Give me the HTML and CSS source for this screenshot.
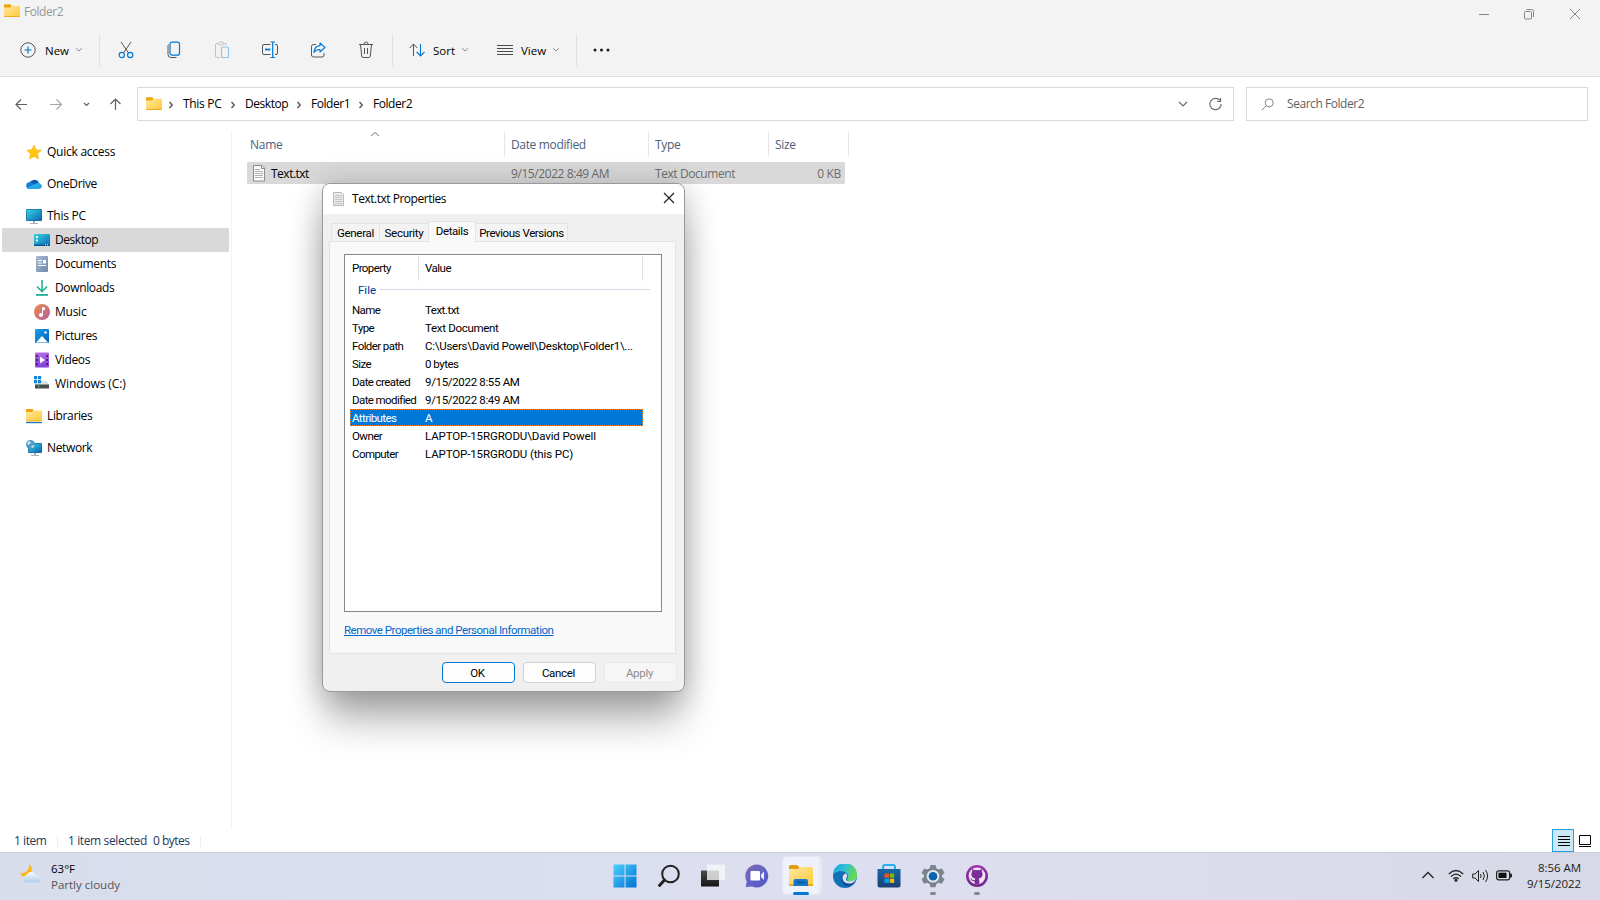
FILE: index.html
```html
<!DOCTYPE html>
<html lang="en">
<head>
<meta charset="utf-8">
<title>Folder2</title>
<link rel="stylesheet" href="styles.css">
</head>
<body>
<svg class="defs" aria-hidden="true">
  <defs>
    <linearGradient id="gf" x1="0" y1="0" x2="1" y2="1"><stop offset="0" stop-color="#ffe8a0"/><stop offset="1" stop-color="#ffc83a"/></linearGradient>
    <linearGradient id="gm" x1="0" y1="0" x2="1" y2="1"><stop offset="0" stop-color="#34d6e0"/><stop offset="1" stop-color="#0f64b8"/></linearGradient>
    <linearGradient id="gb" x1="0" y1="0" x2="1" y2="1"><stop offset="0" stop-color="#18a0e8"/><stop offset="1" stop-color="#0560b6"/></linearGradient>
    <linearGradient id="gw" x1="0" y1="0" x2="1" y2="1"><stop offset="0" stop-color="#4fd0ff"/><stop offset="1" stop-color="#0072d0"/></linearGradient>
    <linearGradient id="gmu" x1="0" y1="0" x2="1" y2="1"><stop offset="0" stop-color="#ee8850"/><stop offset="1" stop-color="#b0609c"/></linearGradient>
    <linearGradient id="gd" x1="0" y1="0" x2="1" y2="1"><stop offset="0" stop-color="#a9bbd3"/><stop offset="1" stop-color="#6d89ad"/></linearGradient>
    <linearGradient id="gv" x1="0" y1="0" x2="0" y2="1"><stop offset="0" stop-color="#b36ae8"/><stop offset="1" stop-color="#8240dc"/></linearGradient>
    <linearGradient id="gc" x1="0" y1="0" x2="0" y2="1"><stop offset="0" stop-color="#f4f8fd"/><stop offset="1" stop-color="#b4cdea"/></linearGradient>
    <linearGradient id="gch" x1="0" y1="0" x2="1" y2="1"><stop offset="0" stop-color="#8a64a8"/><stop offset=".5" stop-color="#6264c8"/><stop offset="1" stop-color="#5155c4"/></linearGradient>
    <linearGradient id="ge" x1="0" y1="0" x2="1" y2=".4"><stop offset="0" stop-color="#1a9fe0"/><stop offset=".5" stop-color="#30bfd8"/><stop offset="1" stop-color="#66d956"/></linearGradient>
    <linearGradient id="gs" x1="0" y1="0" x2="0" y2="1"><stop offset="0" stop-color="#1668a8"/><stop offset="1" stop-color="#1c3f74"/></linearGradient>
    <linearGradient id="gt" x1="0" y1="0" x2="0" y2="1"><stop offset="0" stop-color="#4a4a4a"/><stop offset="1" stop-color="#161616"/></linearGradient>
    <linearGradient id="gg" x1="0" y1="0" x2="0" y2="1"><stop offset="0" stop-color="#a032b0"/><stop offset="1" stop-color="#6a2888"/></linearGradient>
    <symbol id="folder" viewBox="0 0 16 14"><path d="M0 1.200Q0 .2 1 .2h5.200L7.700 2v2H0z" fill="#f0a30a"/><path d="M0 3.400h6L7.600 1.800H15q1 0 1 1v9.200q0 1-1 1H1q-1 0-1-1z" fill="url(#gf)"/><path d="M0 12h16q0 1-1 1H1q-1 0-1-1z" fill="#f1a51e"/></symbol>
    <symbol id="chev-r" viewBox="0 0 6 8"><path d="M1.500 1l2.700 3-2.700 3" fill="none" stroke="#555" stroke-width="1.400"/></symbol>
    <symbol id="chev-d" viewBox="0 0 8 6"><path d="M1.200 1.300L4 4l2.800-2.700" fill="none" stroke="#8a8a8a" stroke-width="1"/></symbol>
    <symbol id="txt" viewBox="0 0 14 17"><path d="M1.500.500h8.500L12.500 3v13H1.500z" fill="#fcfcfc" stroke="#8d8d8d"/><path d="M9.500.5v3h3" fill="none" stroke="#8d8d8d"/><path d="M3 4.500h5M3 6.500h8M3 8.500h8M3 10.500h8M3 12.500h8" stroke="#a8a8a8" stroke-width=".9"/></symbol>
    <symbol id="txt-dim" viewBox="0 0 11 14"><path d="M.5.500h8L10.500 2.500v11H.5z" fill="#ececec" stroke="#b9b9b9"/><path d="M2 3.500h7M2 5.500h7M2 7.500h7M2 9.500h7M2 11.500h7" stroke="#c4c4c4"/></symbol>
  </defs>
</svg>

<div class="explorer">
  <header class="top">
    <div class="titlebar">
      <svg class="title-icon" width="16" height="14"><use href="#folder"/></svg>
      <span class="title">Folder2</span>
      <svg class="caption" width="102" height="12" viewBox="0 0 102 12" fill="none" stroke="#868686"><path d="M0 6.500h10"/><rect x="45.500" y="3.500" width="7" height="7.500" rx="1"/><path d="M47.500 1.500h5q2 0 2 2v5.500"/><path d="M91 1l10 10M101 1L91 11"/></svg>
    </div>
    <div class="commands">
      <div class="cmd cmd-new"><svg width="16" height="16" viewBox="0 0 16 16" fill="none"><circle cx="8" cy="8" r="7.200" stroke="#555"/><path d="M8 4.500v7M4.500 8h7" stroke="#0078d4" stroke-width="1.200"/></svg><span class="cmd-label">New</span><svg width="8" height="6"><use href="#chev-d"/></svg></div>
      <div class="sep"></div>
      <div class="tools">
        <svg width="16" height="18" viewBox="0 0 16 18" fill="none"><path d="M3 1l7.500 11M13 1L5.500 12" stroke="#555"/><circle cx="3.800" cy="14" r="2.600" stroke="#0078d4" stroke-width="1.200"/><circle cx="12.200" cy="14" r="2.600" stroke="#0078d4" stroke-width="1.200"/></svg>
        <svg width="16" height="18" viewBox="0 0 16 18" fill="none"><path d="M2.500 3.500Q2 4 2 5v8.500q0 3 3 3h5.500" stroke="#555"/><rect x="4" y="1.200" width="9.500" height="13" rx="2" stroke="#0078d4" stroke-width="1.200"/></svg>
        <svg width="16" height="18" viewBox="0 0 16 18" fill="none"><path d="M4.500 2.500H3Q1.500 2.500 1.500 4v11q0 1.500 1.500 1.500h3M9.500 2.500H11q1.500 0 1.500 1.500" stroke="#c2c2c2"/><rect x="4.500" y="1.200" width="5" height="2.500" rx="1" stroke="#c2c2c2"/><rect x="7.500" y="6" width="7" height="10.500" rx="1" stroke="#93c5ea" stroke-width="1.200"/></svg>
        <svg width="16" height="18" viewBox="0 0 16 18" fill="none"><path d="M8.500 3.500H2Q.5 3.500.5 5v7q0 1.500 1.500 1.500h6.500M13 3.500h1q1.500 0 1.500 1.500v7q0 1.500-1.500 1.500h-1" stroke="#555"/><path d="M3 8.500h5.500" stroke="#0078d4" stroke-width="1.800"/><path d="M8.500 1h4.500M8.500 16.500h4.500M10.700 1v15.500" stroke="#0078d4" stroke-width="1.200"/></svg>
        <svg width="16" height="18" viewBox="0 0 16 18" fill="none"><path d="M6 3.500H3.500q-2 0-2 2V14q0 2 2 2H12q2 0 2-2v-2" stroke="#555"/><path d="M10 2l5 4.500-5 4.500V8.500Q6 8.300 4 11.500 4.300 5 10 4.600z" stroke="#0078d4" stroke-width="1.100" stroke-linejoin="round"/></svg>
        <svg width="16" height="18" viewBox="0 0 16 18" fill="none" stroke="#555"><path d="M1 3.500h14M5.800 3.500Q6 1 8 1t2.200 2.500M2.500 3.500l1.200 11.500q.2 1.500 1.500 1.500h5.600q1.300 0 1.500-1.500l1.200-11.500M6.500 7v6M9.500 7v6"/></svg>
      </div>
      <div class="sep"></div>
      <div class="cmd cmd-sort"><svg width="17" height="14" viewBox="0 0 17 14" fill="none"><path d="M4.500 13V1M.7 5l3.800-4 3.800 4" stroke="#555"/><path d="M11.500 1v12M7.700 9l3.800 4 4-4" stroke="#0078d4" stroke-width="1.100"/></svg><span class="cmd-label">Sort</span><svg width="8" height="6"><use href="#chev-d"/></svg></div>
      <div class="cmd cmd-view"><svg width="16" height="12" viewBox="0 0 16 12"><path d="M0 1.500h16M0 4.500h16M0 7.500h16M0 10.500h16" stroke="#4a4a4a"/></svg><span class="cmd-label">View</span><svg width="8" height="6"><use href="#chev-d"/></svg></div>
      <div class="sep"></div>
      <svg class="more" width="17" height="4" viewBox="0 0 17 4" fill="#1a1a1a"><circle cx="2" cy="2" r="1.500"/><circle cx="8.500" cy="2" r="1.500"/><circle cx="15" cy="2" r="1.500"/></svg>
    </div>
  </header>

  <div class="nav">
    <svg class="nav-btns" width="108" height="14" viewBox="0 0 108 14" fill="none" stroke="#606060" stroke-width="1.200"><path d="M12 7.500H1M6 2.500L1 7.500l5 5"/><path d="M35 7.500h11M41.500 2.500l5 5-5 5" stroke="#a6a6a6"/><path d="M69 6l2.500 2.500L74 6"/><path d="M100.500 13V2M95.500 7l5-5 5 5"/></svg>
    <div class="address">
      <svg width="16" height="14"><use href="#folder"/></svg>
      <svg class="crumb-sep first" width="6" height="8"><use href="#chev-r"/></svg><span class="crumb w-pc">This PC</span>
      <svg class="crumb-sep" width="6" height="8"><use href="#chev-r"/></svg><span class="crumb w-desk">Desktop</span>
      <svg class="crumb-sep" width="6" height="8"><use href="#chev-r"/></svg><span class="crumb w-f1">Folder1</span>
      <svg class="crumb-sep" width="6" height="8"><use href="#chev-r"/></svg><span class="crumb">Folder2</span>
      <svg class="addr-end" width="44" height="14" viewBox="0 0 44 14" fill="none" stroke="#6b6b6b" stroke-width="1.200"><path d="M1 5l4 4 4-4"/><path d="M42 3.500A5.700 5.700 0 1 0 43.200 7M42.500 1v3.500H39"/></svg>
    </div>
    <div class="search">
      <svg width="13" height="13" viewBox="0 0 13 13" fill="none" stroke="#8c8688"><circle cx="8.200" cy="4.800" r="4"/><path d="M5.200 7.800L.7 12.300"/></svg>
      <span>Search Folder2</span>
    </div>
  </div>

  <div class="main">
    <aside class="tree">
      <div class="node top-level"><svg width="16" height="16" viewBox="0 0 16 16"><path d="M8 1l2.200 4.700 5.100.6-3.800 3.500 1 5.100L8 12.400l-4.500 2.500 1-5.100L.7 6.300l5.100-.6z" fill="#ffc60b" stroke="#f2a60d" stroke-width=".5"/></svg><span>Quick access</span></div>
      <div class="node top-level od"><svg width="16" height="16" viewBox="0 0 16 16"><path d="M3 8a5.300 5.300 0 0 1 10-1l-4 4z" fill="#0a5ab0"/><path d="M3.500 13A3.400 3.400 0 0 1 3.700 6.200Q6 6 8.500 8.500L12 13z" fill="#1480d4"/><path d="M12.800 13H3.400q-1.200 0-2.300-1l8-4q3-2.300 5.500 0 1.400 1 1.400 2.300 0 2.300-3.200 2.700z" fill="#28a8ea"/></svg><span>OneDrive</span></div>
      <div class="node top-level last"><svg width="16" height="16" viewBox="0 0 16 16"><path d="M7 13h2v2h3v1H4v-1h3z" fill="#a8b2ba"/><rect y="1" width="16" height="12" rx="1" fill="#176a9a"/><rect x=".7" y="1.700" width="14.600" height="10.600" fill="url(#gm)"/></svg><span>This PC</span></div>
      <div class="node child selected"><svg width="16" height="16" viewBox="0 0 16 16"><rect y="2" width="16" height="12" rx="1" fill="url(#gm)"/><path d="M0 12.500h16v1q0 .5-1 .5H1q-1 0-1-.5z" fill="#0a5590"/><path d="M2 4h2v2H2zM2 7.500h2v2H2z" fill="#e6fbff"/><path d="M11 12.800h1M13 12.800h1" stroke="#fff"/></svg><span>Desktop</span></div>
      <div class="node child tight"><svg width="16" height="16" viewBox="0 0 16 16"><rect x="2" width="12" height="16" rx="1" fill="url(#gd)"/><path d="M4 4.500h4M4 7h4M4 9.500h8" stroke="#fff"/><rect x="9" y="4" width="3" height="3.500" fill="#fff"/></svg><span>Documents</span></div>
      <div class="node child tight"><svg width="16" height="16" viewBox="0 0 16 16"><path d="M8 0v11M3 6.500l5 5 5-5" fill="none" stroke="#1fb492" stroke-width="1.600"/><path d="M2 14h12v1.800H2z" fill="#1aae92"/></svg><span>Downloads</span></div>
      <div class="node child"><svg width="16" height="16" viewBox="0 0 16 16"><circle cx="8" cy="8" r="8" fill="url(#gmu)"/><circle cx="7" cy="11" r="2" fill="#fff"/><path d="M8 3v8h1V6h2V3.500z" fill="#fff"/></svg><span>Music</span></div>
      <div class="node child tight"><svg width="16" height="16" viewBox="0 0 16 16"><rect x="1" y="1" width="14" height="14" rx="1" fill="url(#gb)"/><path d="M2 14.500L8 8l6 6.500z" fill="#fff"/><circle cx="11.500" cy="4.500" r="1.300" fill="#d8f0ff"/></svg><span>Pictures</span></div>
      <div class="node child tight"><svg width="16" height="16" viewBox="0 0 16 16"><rect x="1" y=".5" width="14" height="15" rx="1" fill="url(#gv)"/><path d="M6 4.500l5 3.500-5 3.500z" fill="#fff"/><path d="M2 3h1.800v2H2zM2 7h1.800v2H2zM2 11h1.800v2H2zM12.200 3H14v2h-1.800zM12.200 7H14v2h-1.800zM12.200 11H14v2h-1.800z" fill="#482070"/></svg><span>Videos</span></div>
      <div class="node child drive"><svg width="16" height="16" viewBox="0 0 16 16"><path d="M2 7.500L4 5h9l2 4H1.500z" fill="#dde1e4"/><rect x="1" y="8.500" width="14" height="4" fill="#4a4d50"/><path d="M0 0h7.500v7.500H0z" fill="#fff"/><path d="M0 0h3.200v3.200H0zM4 0h3.200v3.200H4zM0 4h3.200v3.200H0zM4 4h3.200v3.200H4z" fill="#1486d8"/><rect x="4" y="9.500" width="1.300" height="1.300" fill="#3be05c"/></svg><span>Windows (C:)</span></div>
      <div class="node top-level after tight"><svg width="16" height="16" viewBox="0 0 16 16"><path d="M0 2q0-1 1-1h5.500L8 2.500V5H0z" fill="#f0a30a"/><path d="M0 4h6l1.500-1.500H15q1 0 1 1V13H0z" fill="url(#gf)"/><path d="M1 12.500h14v1H1z" fill="#f0a30a"/><path d="M0 14h16v1.200H0z" fill="#1478c8"/></svg><span>Libraries</span></div>
      <div class="node top-level tight"><svg width="16" height="16" viewBox="0 0 16 16"><path d="M8 13h2v2h3v1H5v-1h3z" fill="#a8b2ba"/><rect x="2" y="3" width="14" height="10" rx="1" fill="#176a9a"/><rect x="2.700" y="3.700" width="12.600" height="8.600" fill="url(#gm)"/><circle cx="4.500" cy="4.500" r="4.500" fill="#4c9bc2"/><path d="M1 3l2-2 2 1-1 2-2 1zM5 6l3-1 0 2-2 1z" fill="#c9e4f0"/></svg><span>Network</span></div>
    </aside>
    <section class="files">
      <div class="columns">
        <div class="col c-name">Name<svg class="sort-mark" width="10" height="6" viewBox="0 0 10 6"><path d="M1 5l4-3.500L9 5" fill="none" stroke="#777"/></svg></div>
        <div class="col c-date">Date modified</div>
        <div class="col c-type">Type</div>
        <div class="col c-size">Size</div>
      </div>
      <div class="file">
        <div class="f-name"><svg width="14" height="17"><use href="#txt"/></svg><span>Text.txt</span></div>
        <div class="f-date">9/15/2022 8:49 AM</div>
        <div class="f-type">Text Document</div>
        <div class="f-size">0 KB</div>
      </div>
    </section>
  </div>

  <footer class="status">
    <span class="st-count">1 item</span>
    <span class="st-sel">1 item selected</span>
    <span class="st-bytes">0 bytes</span>
    <div class="view-on"><svg width="12" height="12" viewBox="0 0 12 12"><path d="M0 1.500h12M0 4.500h12M0 7.500h12M0 10.500h12" stroke="#000"/></svg></div>
    <svg class="view-off" width="12" height="13" viewBox="0 0 12 13" fill="none" stroke="#000"><path d="M.5.500h11v9H.5zM0 11.500h12"/></svg>
  </footer>
</div>

<div class="taskbar">
  <div class="weather">
    <svg width="22" height="20" viewBox="0 0 22 20"><path d="M9 0q4 3 2.500 7.500T5 13.500Q1 13 .5 8.500 4 10 6.800 7T9 0z" fill="#ffb915"/><path d="M7 18.500Q2.500 18.500 2.500 15.200 2.600 12 6 11.800 7.500 7.800 11.500 8q3.500.2 4.700 3.200 5 0 5.100 3.700-.1 3.500-4.300 3.600z" fill="url(#gc)"/></svg>
    <div class="w-text"><div class="w-temp">63°F</div><div class="w-desc">Partly cloudy</div></div>
  </div>
  <div class="apps">
    <div class="app"><svg width="24" height="24" viewBox="0 0 24 24"><path d="M.5.500h11v11H.5zM12.500.500h11v11h-11zM.5 12.500h11v11H.5zM12.500 12.500h11v11h-11z" fill="url(#gw)"/></svg></div>
    <div class="app"><svg width="24" height="24" viewBox="0 0 24 24" fill="none" stroke="#222"><circle cx="13.500" cy="10" r="8.300" stroke-width="2"/><path d="M7.500 16L2.500 21.500" stroke-width="3" stroke-linecap="round"/></svg></div>
    <div class="app"><svg width="24" height="24" viewBox="0 0 24 24"><rect y="6.500" width="18" height="16" fill="url(#gt)"/><rect x="6" y=".5" width="18" height="15.500" fill="#f8f8f8" opacity=".78"/></svg></div>
    <div class="app"><svg width="24" height="24" viewBox="0 0 24 24"><path d="M12 .5A11.500 11.500 0 1 1 7 22.500L.7 23l1-5.500A11.500 11.500 0 0 1 12 .5z" fill="url(#gch)"/><rect x="5.500" y="7" width="9.500" height="9.500" rx="1" fill="#fff"/><path d="M16 10.500l3-3v8.500l-3-3z" fill="#eee"/></svg></div>
    <div class="app active"><svg width="24" height="24" viewBox="0 0 24 24"><path d="M0 3q0-2 2-2h6l2.500 2.500V6H0z" fill="#dc9b0c"/><path d="M0 5h9l2-2h11q2 0 2 2v17H0z" fill="url(#gf)"/><path d="M0 20h24v2H0z" fill="#e9ab24"/><path d="M4.500 22v-5q0-2 2-2H17q2 0 2 2v5z" fill="#1277c8"/><path d="M8 18.500h8" stroke="#0a5296" stroke-width="1.500"/></svg><i class="run wide"></i></div>
    <div class="app"><svg width="24" height="24" viewBox="0 0 24 24"><circle cx="12" cy="12" r="12" fill="#1270ba"/><path d="M0 11A12 12 0 0 1 24 11q.3 6-6.500 6-4 0-3.500-2 2-2 .5-5Q10 5 4 8 1 9 0 11z" fill="url(#ge)"/><path d="M9 11q-3 7 4 11 5 1 8.500-4-5 2-9-.5Q8.500 14.500 11 10z" fill="#0d4f96"/><path d="M14.500 17q-2.500-1-1-3 1.500-2.500-.5-4.500-4 1-3.500 5 1 5.500 8 5 3.500-.7 5.500-4.500-4 3-8.500 2z" fill="#dcdff0"/></svg></div>
    <div class="app"><svg width="24" height="24" viewBox="0 0 24 24"><path d="M6 6V3q0-2 2-2h8q2 0 2 2v3" fill="none" stroke="#22b0f0" stroke-width="2"/><path d="M.5 5h23v16q0 2.500-2.500 2.500H3Q.5 23.500.5 21z" fill="url(#gs)"/><path d="M7.500 9.500H12v4.200H7.500z" fill="#f25022"/><path d="M12.800 9.500h4.400v4.200h-4.400z" fill="#7fba00"/><path d="M7.500 14.700H12v4.200H7.500z" fill="#00a4ef"/><path d="M12.800 14.700h4.400v4.200h-4.400z" fill="#ffb900"/></svg></div>
    <div class="app"><svg width="24" height="24" viewBox="0 0 24 24"><path d="M9.500 1h5l.8 3.200 2.400 1.300 3.200-1 2.600 4.400L21 11.200v1.900l2.500 2.200-2.600 4.400-3.200-.9-2.400 1.300-.8 3.200h-5l-.8-3.200-2.400-1.300-3.200.9-2.600-4.400L3 13.100v-1.900L.5 8.900l2.600-4.400 3.200 1 2.400-1.300z" fill="#7b838b"/><circle cx="12" cy="12.200" r="6.300" fill="#e3e8ee"/><circle cx="12" cy="12.200" r="4.300" fill="#0d62ae"/></svg><i class="run"></i></div>
    <div class="app"><svg width="24" height="24" viewBox="0 0 24 24"><circle cx="12" cy="12" r="11" fill="url(#gg)"/><circle cx="12" cy="12" r="8.400" fill="#f2e6f6"/><path d="M9.700 20.500v-3q-3.200 0-3.700-2.500l-1.500-1.200q2-.2 2.700 1.700 1 1.200 2.500.5l.7-1.500q-4.300-.7-4-5l.8-2V5l2.800 1.200q2-.5 4 0L16.800 5v2.500l.8 2q.3 4.300-4 5l.7 1.500v4.500z" fill="#7b2c96"/></svg><i class="run"></i></div>
  </div>
  <div class="tray">
    <svg class="t-up" width="12" height="8" viewBox="0 0 12 8"><path d="M.5 7L6 1.500 11.500 7" fill="none" stroke="#222" stroke-width="1.300"/></svg>
    <svg class="t-wifi" width="16" height="13" viewBox="0 0 16 13" fill="none" stroke="#222" stroke-width="1.200"><path d="M.8 5Q8-2 15.200 5M3 7.500q5-4.800 10 0M5.300 9.800q2.700-2.500 5.400 0"/><circle cx="8" cy="11.200" r="1" fill="#222"/></svg>
    <svg class="t-vol" width="17" height="14" viewBox="0 0 17 14" fill="none" stroke="#222"><path d="M.7 5h2.500L6.500 1.500v11L3.200 9H.7zM8.500 5q1.200 2 0 4M11 3q2.700 4 0 8M13.500 1q4.200 6 0 12"/></svg>
    <svg class="t-bat" width="16" height="11" viewBox="0 0 16 11"><rect x=".6" y=".8" width="13" height="9" rx="2" fill="none" stroke="#222" stroke-width="1.200"/><rect x="2.500" y="2.700" width="8" height="5.300" fill="#111"/><path d="M14 3.500h1q1 0 1 1v2q0 1-1 1h-1z" fill="#222"/></svg>
    <div class="clock"><div>8:56 AM</div><div>9/15/2022</div></div>
  </div>
</div>

<div class="dialog">
  <div class="d-title"><svg width="11" height="14"><use href="#txt-dim"/></svg><span>Text.txt Properties</span><svg class="d-close" width="12" height="12" viewBox="0 0 12 12"><path d="M1 1l10 10M11 1L1 11" stroke="#222" stroke-width="1.200"/></svg></div>
  <div class="d-body">
    <div class="tabs"><div class="tab tab-g">General</div><div class="tab tab-s">Security</div><div class="tab tab-d">Details</div><div class="tab tab-p">Previous Versions</div></div>
    <div class="panel">
      <div class="list">
        <div class="l-head"><div class="lh-p">Property</div><div class="lh-v">Value</div></div>
        <div class="group"><span>File</span><i></i></div>
        <div class="prop"><span class="k">Name</span><span class="name">Text.txt</span></div>
        <div class="prop"><span class="k">Type</span><span>Text Document</span></div>
        <div class="prop"><span class="k">Folder path</span><span class="path">C:\Users\David Powell\Desktop\Folder1\...</span></div>
        <div class="prop"><span class="k">Size</span><span class="name">0 bytes</span></div>
        <div class="prop"><span class="k">Date created</span><span class="date">9/15/2022 8:55 AM</span></div>
        <div class="prop"><span class="k">Date modified</span><span class="date">9/15/2022 8:49 AM</span></div>
        <div class="prop on"><span class="k">Attributes</span><span>A</span></div>
        <div class="prop"><span class="k">Owner</span><span class="host">LAPTOP-15RGRODU\David Powell</span></div>
        <div class="prop"><span class="k">Computer</span><span class="host">LAPTOP-15RGRODU (this PC)</span></div>
      </div>
      <div class="link">Remove Properties and Personal Information</div>
    </div>
    <div class="buttons"><div class="btn primary">OK</div><div class="btn">Cancel</div><div class="btn disabled">Apply</div></div>
  </div>
</div>
</body>
</html>
```
FILE: styles.css
```css
* { box-sizing: border-box; }
body { margin: 0; width: 1600px; height: 900px; overflow: hidden; background: #fff; font: 12px/16px "Open Sans", "Noto Sans", sans-serif; letter-spacing: -0.25px; color: #000; white-space: nowrap; }
svg { display: block; flex: none; }
.defs { position: absolute; width: 0; height: 0; }
.explorer { height: 852px; display: flex; flex-direction: column; }

/* Title bar and command bar */
.top { height: 77px; background: #f3f3f3; border-bottom: 1px solid #dfdfdf; }
.titlebar { display: flex; height: 24px; padding: 4px 19px 0 4px; }
.title { margin-left: 4px; color: #999; letter-spacing: -0.45px; }
.caption { margin: 4px 0 0 auto; }
.commands { display: flex; align-items: center; height: 52px; }
.cmd { display: flex; align-items: center; height: 32px; }
.cmd-new { width: 99px; padding-left: 20px; }
.cmd-label { font-size: 11.5px; letter-spacing: 0; padding-top: 1px; }
.cmd-new .cmd-label { width: 30px; margin-left: 9px; }
.sep { width: 1px; height: 32px; background: #e1e1e1; }
.tools { display: flex; gap: 32px; width: 292px; padding-left: 18px; }
.cmd-sort { width: 88px; padding-left: 16px; }
.cmd-sort .cmd-label { width: 28px; margin-left: 7px; }
.cmd-view { width: 95px; padding-left: 16px; }
.cmd-view .cmd-label { width: 31px; margin-left: 8px; }
.more { margin-left: 16px; }

/* Address row */
.nav { display: flex; align-items: flex-start; height: 54px; padding: 10px 12px 0 14px; }
.nav-btns { margin: 10px 14px 0 1px; }
.address { display: flex; align-items: center; width: 1097px; height: 34px; padding: 0 11px 0 8px; border: 1px solid #d9d9d9; letter-spacing: -0.45px; }
.crumb-sep { margin: 1px 9px 0 0; }
.crumb-sep.first { margin-left: 6px; }
.w-pc { width: 47px; letter-spacing: -0.3px; }
.w-desk { width: 51px; }
.w-f1 { width: 47px; }
.addr-end { margin-left: auto; }
.search { display: flex; align-items: center; width: 342px; height: 34px; margin-left: 12px; padding-left: 14px; border: 1px solid #d9d9d9; color: #5f5f5f; letter-spacing: -0.45px; }
.search span { margin-left: 13px; }

/* Tree and file list */
.main { display: flex; flex: 1; }
.tree { width: 232px; height: 698px; margin-top: 1px; padding: 9px 2px 0 2px; border-right: 1px solid #f3f3f3; }
.node { display: flex; align-items: center; gap: 5px; height: 24px; border-radius: 1px; }
.top-level { margin-bottom: 8px; padding-left: 24px; }
.top-level.last { margin-bottom: 0; }
.top-level.after { margin-top: 8px; }
.child { padding-left: 32px; }
.drive { letter-spacing: -0.1px; }
.tight, .od { letter-spacing: -0.36px; }
.selected { background: #d9d9d9; letter-spacing: -0.45px; }
.files { margin-left: 15px; }
.columns { display: flex; height: 27px; padding-top: 1px; color: #4c607a; letter-spacing: -0.35px; }
.col { position: relative; height: 26px; padding-top: 6px; padding-left: 6px; border-right: 1px solid #e5e5e5; }
.c-name { width: 258px; padding-left: 3px; letter-spacing: -0.25px; }
.sort-mark { position: absolute; left: 123px; top: 0; }
.c-date { width: 144px; }
.c-type { width: 120px; }
.c-size { width: 80px; }
.file { display: flex; align-items: center; width: 598px; height: 22px; margin-top: 5px; border-radius: 1px; background: #d9d9d9; color: #6d6d6d; letter-spacing: -0.42px; }
.file > div { padding-top: 1px; }
.f-name { display: flex; align-items: center; gap: 5px; width: 264px; color: #000; }
.file > .f-name { padding: 0 0 0 5px; }
.f-name span { padding-top: 1px; letter-spacing: -0.5px; }
.f-date { width: 144px; }
.f-type { width: 120px; }
.f-size { flex: 1; text-align: right; padding-right: 4px; letter-spacing: -0.35px; }

/* Status bar */
.status { display: flex; align-items: center; height: 23px; padding: 2px 9px 0 14px; color: #1e395b; }
.st-count { width: 44px; height: 12px; line-height: 10px; border-right: 1px solid #eee; letter-spacing: -0.45px; }
.st-sel { width: 85px; height: 12px; margin-left: 10px; line-height: 10px; letter-spacing: -0.38px; }
.st-bytes { width: 48px; height: 12px; line-height: 10px; border-right: 1px solid #eee; letter-spacing: -0.5px; }
.view-on { display: flex; align-items: center; justify-content: center; width: 22px; height: 23px; margin: -2px 5px 0 auto; padding-left: 1px; border: 1px solid #26a0da; background: #cce8f6; }

/* Taskbar */
.taskbar { display: flex; justify-content: space-between; position: relative; height: 48px; border-top: 1px solid #c9cbdc; background: linear-gradient(90deg, #d8ddec, #dddff0 55%, #d8d9e6); }
.weather { display: flex; width: 604px; padding: 8px 0 0 20px; }
.weather svg { margin-top: 3px; }
.w-text { margin-left: 9px; }
.w-temp { font-size: 11.5px; letter-spacing: 0; }
.w-desc { font-size: 11.5px; letter-spacing: 0; color: #555; }
.apps { display: flex; gap: 8px; margin-left: 2.5px; padding-top: 4px; }
.app { position: relative; display: flex; align-items: center; justify-content: center; width: 36px; height: 37px; border-radius: 4px; }
.app.active { background: #f0f2fb; box-shadow: 0 0 0 1px #e4e6f2, 2px 0 0 1px #e9ebf5; }
.run { position: absolute; bottom: -1px; left: 15px; width: 6px; height: 3px; border-radius: 2px; background: #85878f; }
.run.wide { left: 10px; width: 16px; background: #0078d4; }
.tray { display: flex; align-items: flex-start; margin-left: auto; padding: 17px 19px 0 0; }
.t-up { margin: 1px 14px 0 0; }
.t-wifi, .t-vol { margin-top: -1px; }
.t-vol { margin-left: 8px; margin-right: 7px; }
.clock { width: 69px; margin-top: -10px; text-align: right; font-size: 11.5px; letter-spacing: -0.05px; color: #1c1c1c; }

/* Properties dialog */
.dialog { position: absolute; left: 322px; top: 183px; width: 363px; height: 509px; border: 1px solid #999; border-radius: 8px; background: #f0f0f0; font: 11.5px/16px Roboto, "Liberation Sans", sans-serif; letter-spacing: -0.3px; box-shadow: 0 32px 38px -4px rgba(0,0,0,.3), 0 2px 30px rgba(0,0,0,.22); }
.d-title { display: flex; align-items: center; height: 30px; padding: 0 9px 0 10px; border-radius: 7px 7px 0 0; background: #fff; font: 12px/16px "Open Sans", sans-serif; letter-spacing: -0.48px; }
.d-title span { margin-left: 8px; }
.d-close { margin: -3px 0 0 auto; }
.d-body { padding: 7px 8px 0 6px; }
.tabs { display: flex; align-items: flex-end; height: 20px; padding-left: 2px; }
.tab { height: 18px; border: 1px solid #e3e3e3; border-bottom: 0; background: #f3f3f3; text-align: center; line-height: 18px; }
.tab-g { width: 48px; border-right: 0; }
.tab-s { width: 49px; border-right: 0; }
.tab-d { height: 21px; width: 48px; margin-bottom: -1px; position: relative; background: #f9f9f9; line-height: 19px; letter-spacing: -0.4px; }
.tab-p { width: 92px; border-left: 0; letter-spacing: -0.42px; }
.panel { height: 413px; padding: 12px 13px 0 14px; border: 1px solid #e3e3e3; background: #f9f9f9; }
.list { width: 318px; height: 358px; padding: 1px 7px 0 5px; border: 1px solid #828790; background: #fff; }
.l-head { display: flex; height: 25px; line-height: 25px; }
.lh-p { width: 69px; padding-left: 2px; border-right: 1px solid #e0e0e0; letter-spacing: -0.6px; }
.lh-v { width: 224px; padding-left: 6px; border-right: 1px solid #e0e0e0; letter-spacing: -0.5px; }
.group { display: flex; align-items: center; height: 17px; padding: 0 4px 0 8px; color: #003399; }
.group span { padding-top: 1px; letter-spacing: 0; }
.group i { flex: 1; height: 1px; margin-left: 4px; background: #d7dbe8; }
.list .group + .prop { margin-top: 3px; }
.prop { display: flex; width: 293px; height: 18px; padding-left: 2px; line-height: 19px; }
.k { width: 73px; letter-spacing: -0.58px; }
.name { letter-spacing: -0.5px; }
.path { letter-spacing: -0.26px; }
.date { letter-spacing: -0.33px; }
.host { letter-spacing: -0.12px; }
.on { height: 17px; margin-bottom: 1px; outline: 1px dotted #ff8728; outline-offset: -1px; background: #0078d7; color: #fff; }
.link { display: inline-block; height: 15px; margin-top: 11px; line-height: 15px; color: #0066cc; text-decoration: underline; letter-spacing: -0.48px; }
.buttons { display: flex; justify-content: flex-end; gap: 8px; margin: 8px -1px 0 0; }
.btn { width: 73px; height: 21px; padding-right: 2px; border: 1px solid #d0d0d0; border-radius: 4px; background: #fdfdfd; text-align: center; line-height: 20px; }
.btn.primary { border-color: #0078d4; }
.btn.disabled { border-color: #e8e8e8; background: #f6f6f6; color: #8d8d8d; }
```
